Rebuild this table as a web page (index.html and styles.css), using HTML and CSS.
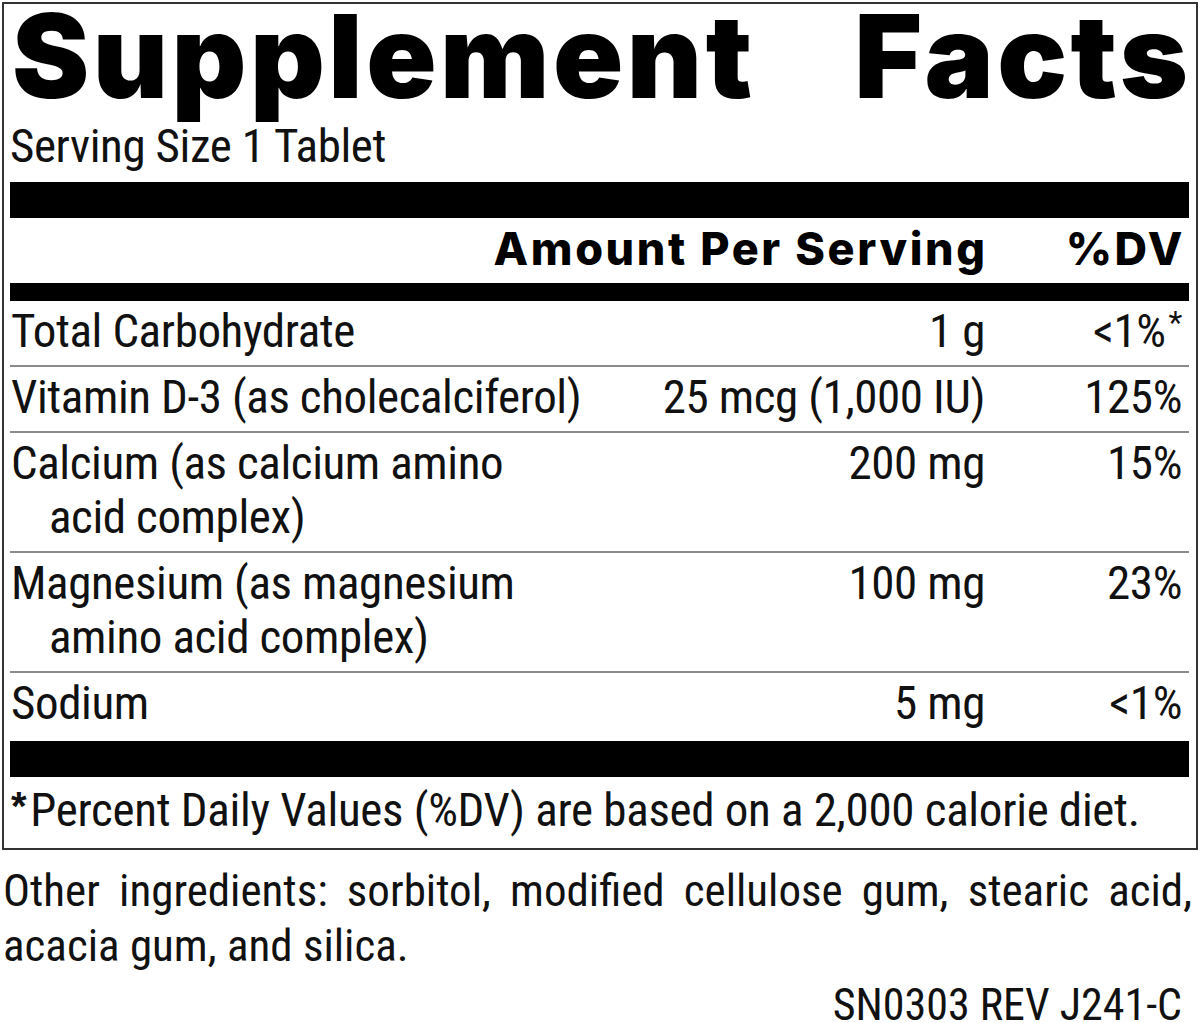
FILE: index.html
```html
<!DOCTYPE html>
<html lang="en">
<head>
<meta charset="utf-8">
<title>Supplement Facts</title>
<link rel="stylesheet" href="styles.css">
</head>
<body>
<div class="label">
  <div class="title"><span>Supplement</span><span class="last-word">Facts</span></div>
  <div class="serving">Serving Size 1 Tablet</div>
  <div class="bar thick"></div>
  <div class="row head"><span class="name"></span><span class="amt">Amount Per Serving</span><span class="dv">%DV</span></div>
  <div class="bar thin"></div>
  <div class="row"><span class="name">Total Carbohydrate</span><span class="amt">1 g</span><span class="dv">&lt;1%<span class="sup">*</span></span></div>
  <div class="row"><span class="name">Vitamin D-3 (as cholecalciferol)</span><span class="amt">25 mcg (1,000 IU)</span><span class="dv">125%</span></div>
  <div class="row"><span class="name">Calcium (as calcium amino<br>acid complex)</span><span class="amt">200 mg</span><span class="dv">15%</span></div>
  <div class="row"><span class="name">Magnesium (as magnesium<br>amino acid complex)</span><span class="amt">100 mg</span><span class="dv">23%</span></div>
  <div class="row last"><span class="name">Sodium</span><span class="amt">5 mg</span><span class="dv">&lt;1%</span></div>
  <div class="bar thick"></div>
  <div class="foot"><span class="star">*</span>Percent Daily Values (%DV) are based on a 2,000 calorie diet.</div>
</div>
<p class="other">Other ingredients: sorbitol, modified cellulose gum, stearic acid, acacia gum, and silica.</p>
<p class="code">SN0303 REV J241-C</p>
</body>
</html>
```
FILE: styles.css
```css
html, body {
  margin: 0;
  padding: 0;
  background: #fff;
  color: #111;
}
body {
  width: 1200px;
  font-family: "Roboto Condensed", "Liberation Sans Narrow", "Liberation Sans", sans-serif;
}
.label {
  margin: 2px 2px 0 2px;
  border: 2px solid #333;
  padding: 0 7px 0 6px;
}
.title {
  display: flex;
  justify-content: space-between;
  font-family: Inter, "Liberation Sans", sans-serif;
  font-weight: 900;
  font-size: 116px;
  line-height: 116px;
  letter-spacing: 3.5px;
  margin-top: -6px;
  padding: 0 1px 0 2px;
  color: #000;
}
.title .last-word {
  margin-right: -3.5px;
}
.serving {
  font-size: 47px;
  letter-spacing: -0.4px;
  line-height: 54px;
  margin-top: 5px;
  height: 63px;
}
.bar {
  background: #000;
}
.bar.thick {
  height: 36px;
}
.bar.thin {
  height: 18px;
}
.row {
  display: flex;
  align-items: flex-start;
  font-size: 47px;
  letter-spacing: -0.4px;
  line-height: 54px;
  padding: 3px 0 7px 1px;
  border-bottom: 2px solid #8a8a8a;
}
.row.last {
  border-bottom: none;
  padding-bottom: 11px;
}
.row .name {
  flex: 1;
  padding-left: 38px;
  text-indent: -38px;
}
.row .amt {
  text-align: right;
  white-space: nowrap;
}
.row .dv {
  width: 204px;
  flex: none;
  padding-right: 7px;
  box-sizing: border-box;
  text-align: right;
  white-space: nowrap;
}
.sup {
  font-size: 32px;
  line-height: 0;
  vertical-align: 14px;
  margin-left: 3px;
}
.row.head {
  font-family: Inter, "Liberation Sans", sans-serif;
  font-weight: 800;
  font-size: 45px;
  letter-spacing: 2.6px;
  line-height: 54px;
  padding: 4px 0 7px 0;
  border-bottom: none;
  color: #000;
}
.row.head .amt {
  margin-right: -2.6px;
}
.row.head .dv {
  padding-right: 4px;
}
.foot {
  font-size: 47px;
  letter-spacing: -0.3px;
  line-height: 54px;
  padding: 2px 0 11px 1px;
}
.star {
  font-family: "Liberation Sans", sans-serif;
  font-weight: 700;
  font-size: 40px;
  vertical-align: 6px;
  margin-right: 4px;
}
.other {
  margin: 13px 8px 0 3px;
  font-size: 45px;
  line-height: 55px;
  text-align: justify;
}
.code {
  margin: 11px 18px 0 0;
  font-size: 44px;
  line-height: 42px;
  text-align: right;
}
```
